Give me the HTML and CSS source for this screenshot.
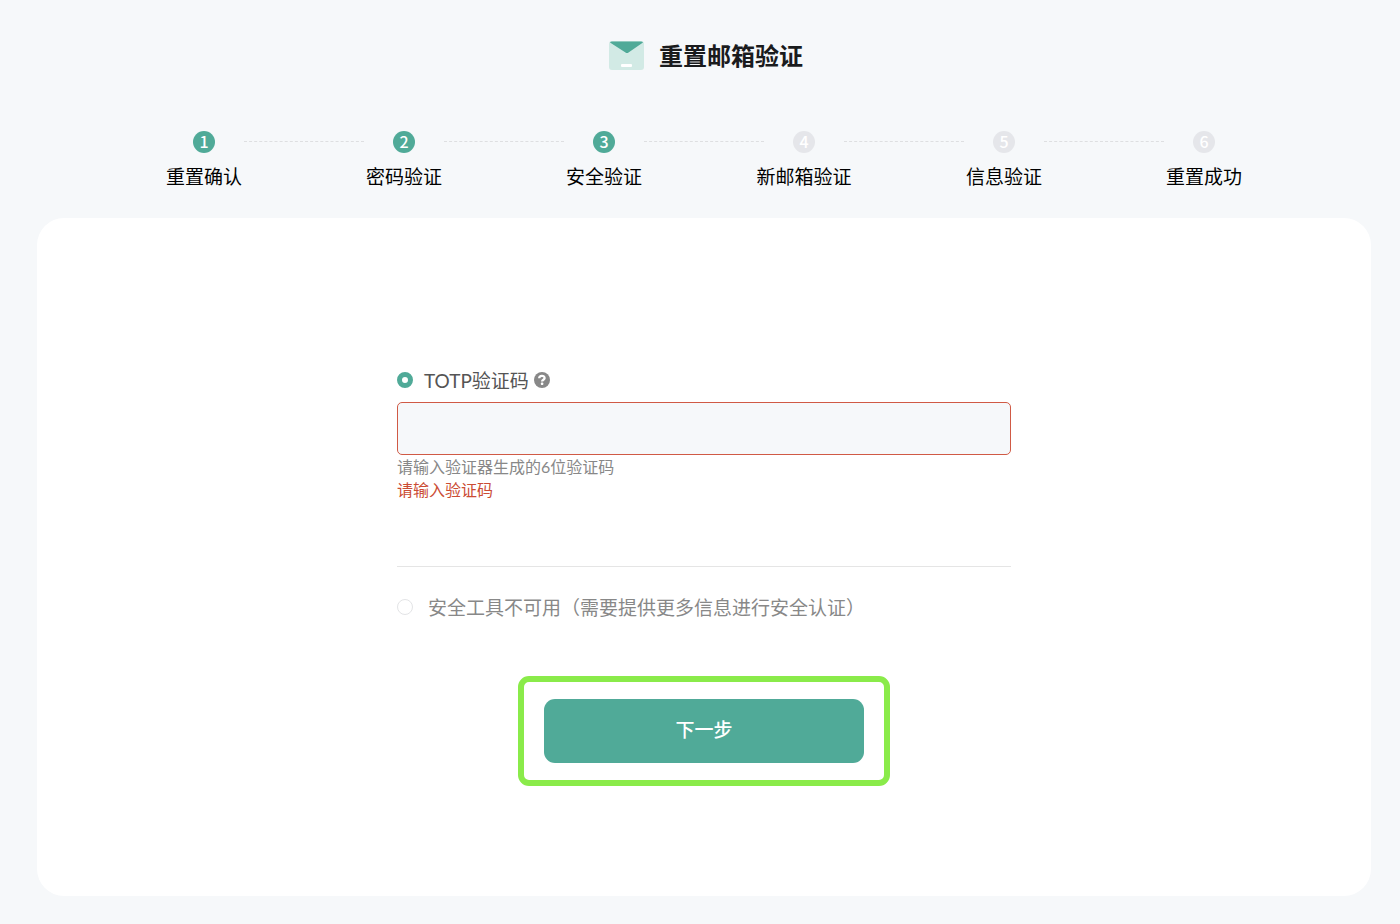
FILE: index.html
```html
<!DOCTYPE html>
<html lang="zh-CN">
<head>
  <meta charset="UTF-8">
  <title>重置邮箱验证</title>
  <link rel="stylesheet" href="styles.css">
</head>
<body>

<header class="page-header">
  <svg class="mail-icon" width="35" height="30" viewBox="0 0 35 30" aria-hidden="true">
    <rect x="0" y="0" width="35" height="29" rx="3" fill="#d2eae5"/>
    <path d="M1 1.500Q1.500 0.500 3 0.500H32Q33.500 0.500 34 1.500L19.500 11.500Q18 12.700 16.500 11.500Z" fill="#50aa98"/>
    <rect x="12" y="23" width="11" height="3" rx="1" fill="#fff"/>
  </svg>
  <h1>重置邮箱验证</h1>
</header>

<ol class="steps">
  <li class="step done"><span class="step-no">1</span><span class="step-name">重置确认</span></li>
  <li class="step done"><span class="step-no">2</span><span class="step-name">密码验证</span></li>
  <li class="step done"><span class="step-no">3</span><span class="step-name">安全验证</span></li>
  <li class="step"><span class="step-no">4</span><span class="step-name">新邮箱验证</span></li>
  <li class="step"><span class="step-no">5</span><span class="step-name">信息验证</span></li>
  <li class="step"><span class="step-no">6</span><span class="step-name">重置成功</span></li>
</ol>

<main class="card">
  <form class="verify-form">
    <div class="option">
      <input type="radio" class="radio" id="useTotp" name="method" checked>
      <label for="useTotp">TOTP验证码</label>
      <svg class="help-icon" width="16" height="16" viewBox="0 0 16 16" aria-hidden="true">
        <circle cx="8" cy="8" r="8" fill="#888"/>
        <path d="M5.200 6.300C5.300 3.100 10.700 3.100 10.600 6.100C10.500 7.800 8.100 7.600 8.100 9.600" fill="none" stroke="#fff" stroke-width="2.300"/>
        <rect x="6.900" y="10.600" width="2.400" height="2.300" rx="0.600" fill="#fff"/>
      </svg>
    </div>
    <input type="text" class="code-input" id="code" aria-label="TOTP验证码" aria-describedby="codeHint codeError">
    <p class="hint" id="codeHint">请输入验证器生成的6位验证码</p>
    <p class="hint error" id="codeError">请输入验证码</p>

    <div class="option other">
      <input type="radio" class="radio" id="noTool" name="method">
      <label for="noTool">安全工具不可用（需要提供更多信息进行安全认证）</label>
    </div>

    <div class="highlight">
      <button type="button" class="btn">下一步</button>
    </div>
  </form>
</main>

</body>
</html>
```

FILE: styles.css
```css
* {
  box-sizing: border-box;
}

body {
  margin: 0;
  padding: 40px 29px 28px 37px;
  background-color: #f6f8fa;
  color: #000;
  font-family: Lato, "Noto Sans CJK SC", sans-serif;
  font-size: 19px;
  line-height: 28px;
}

.page-header {
  display: flex;
  justify-content: center;
  align-items: center;
  gap: 15px;
  padding-left: 4px;
}

h1 {
  margin: 0;
  color: #1a1b1d;
  font-size: 24px;
  line-height: 32px;
}

/* Progress steps */
.steps {
  display: flex;
  max-width: 1200px;
  margin: 59px auto 0;
  padding: 0;
  list-style: none;
}

.step {
  position: relative;
  flex: 1;
  display: flex;
  flex-direction: column;
  align-items: center;
  gap: 10px;
}

.step:not(:last-child)::after {
  content: "";
  position: absolute;
  top: 10px;
  left: calc(50% + 40px);
  right: calc(40px - 50%);
  border-top: 1px dashed #dedfe1;
}

.step-no {
  width: 22px;
  height: 22px;
  border-radius: 50%;
  background-color: #e5e6ea;
  color: white;
  font-family: "Noto Sans CJK SC", sans-serif;
  font-size: 16px;
  font-weight: 500;
  line-height: 20px;
  text-align: center;
}

.step.done .step-no {
  background-color: #50aa98;
}

/* Form card */
.card {
  min-height: 678px;
  margin-top: 27px;
  padding: 148px 20px 110px;
  border-radius: 27px;
  background-color: white;
}

.verify-form {
  max-width: 614px;
  margin: 0 auto;
}

.option {
  display: flex;
  align-items: center;
  color: #555;
}

.option label {
  padding-top: 1px;
  line-height: 27px;
}

.radio {
  appearance: none;
  width: 16px;
  height: 16px;
  margin: 0 11px 0 0;
  border: 1px solid #e3e4e6;
  border-radius: 50%;
  background-color: white;
}

.radio:checked {
  border: 5px solid #50aa98;
}

.help-icon {
  margin-left: 5px;
}

.code-input {
  display: block;
  width: 100%;
  height: 53px;
  margin: 8px 0 0;
  padding: 0 16px;
  border: 1px solid #d05a45;
  border-radius: 5px;
  background-color: #f6f8fa;
  font: inherit;
}

.hint {
  margin: 0;
  color: #888;
  font-size: 16px;
  line-height: 23px;
}

.hint.error {
  color: #cb4c34;
}

.other {
  margin-top: 65px;
  padding-top: 26px;
  border-top: 1px solid #e5e5e5;
  color: #888;
}

.other .radio {
  margin-right: 15px;
}

.highlight {
  width: fit-content;
  margin: 55px auto 0;
  padding: 17px 20px;
  border: 6px solid #8aeb4a;
  border-radius: 11px;
}

.btn {
  display: block;
  width: 320px;
  height: 64px;
  padding: 0 0 2px;
  border: none;
  border-radius: 11px;
  background-color: #50aa98;
  color: white;
  font: inherit;
  font-weight: 500;
  cursor: pointer;
}
```
